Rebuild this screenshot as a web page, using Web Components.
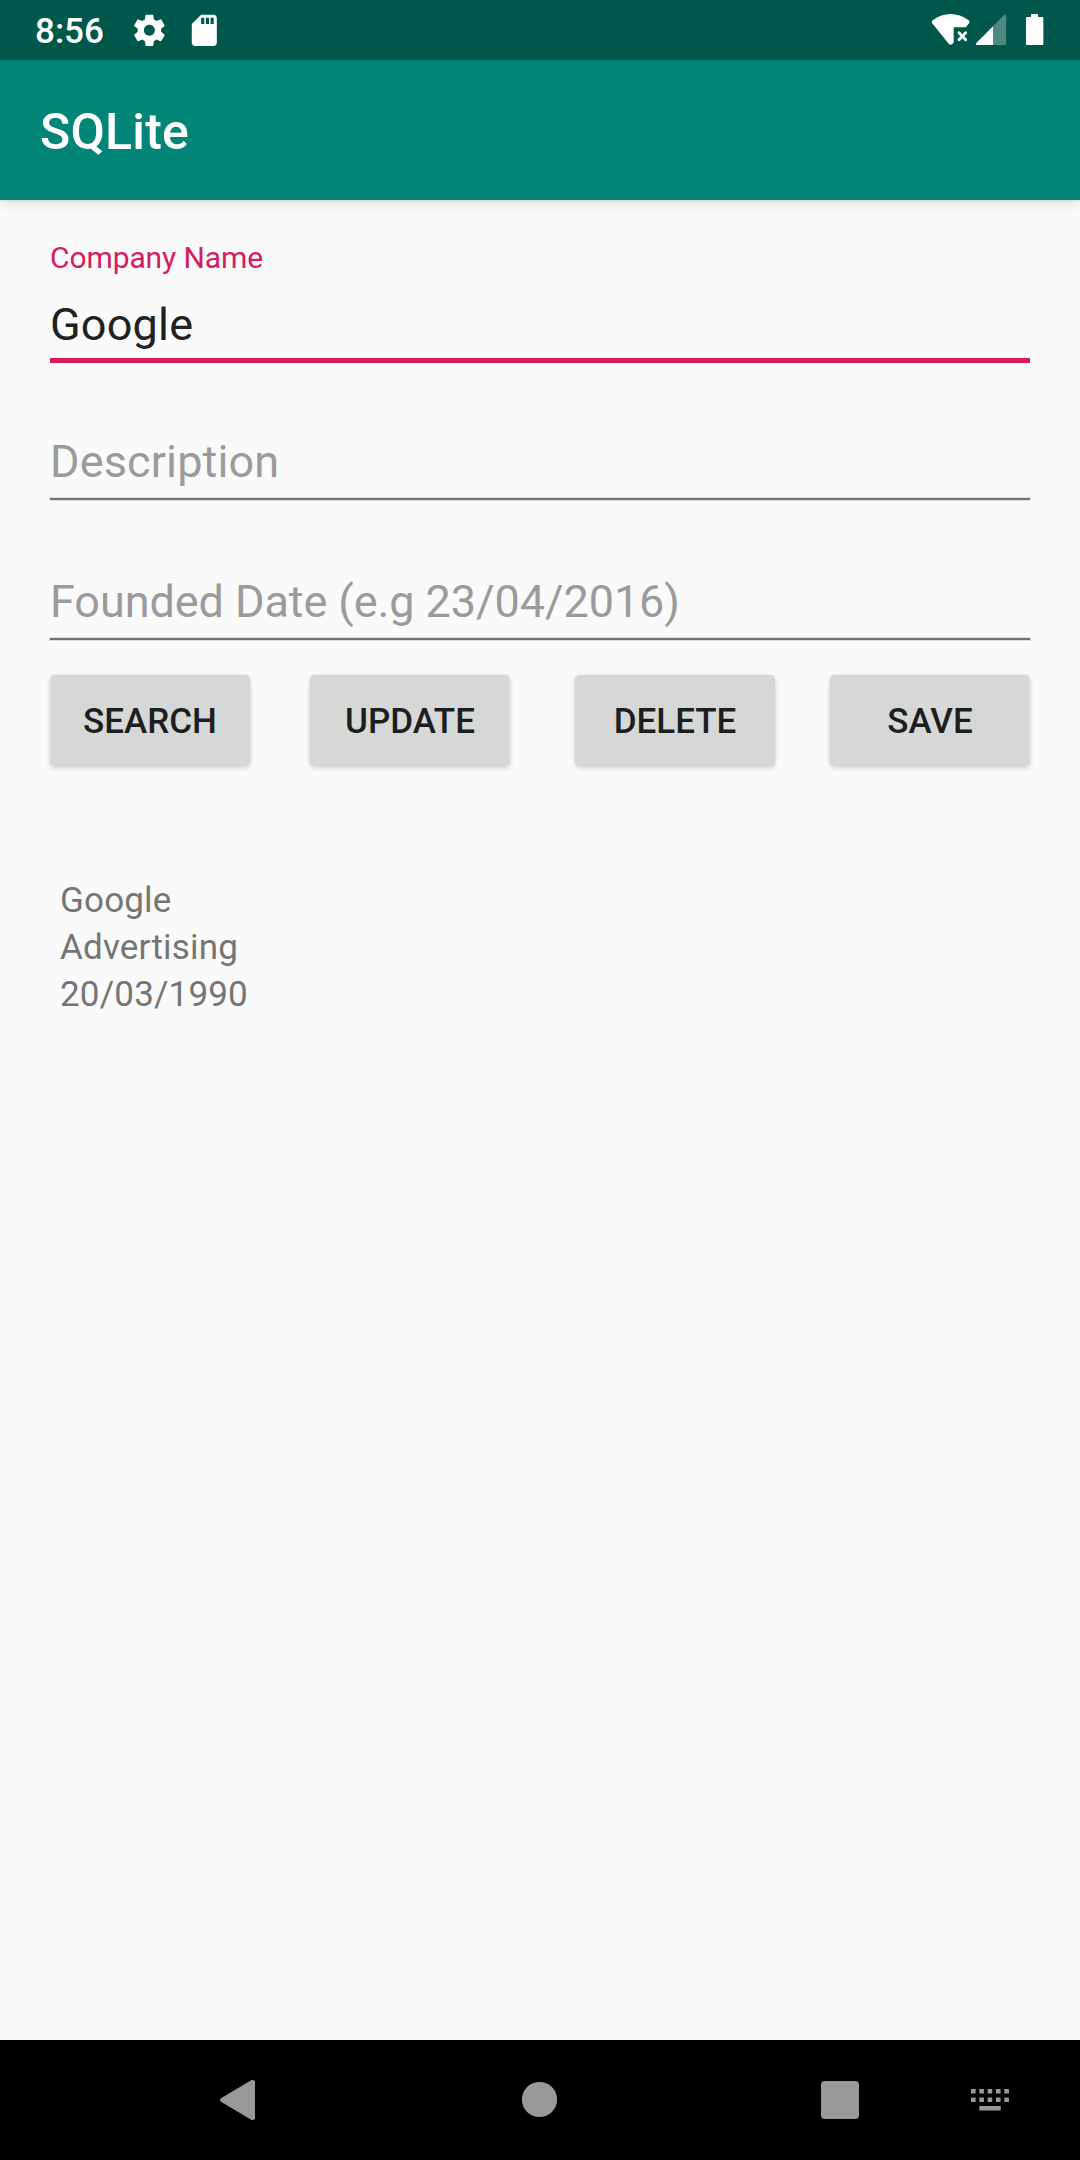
<!DOCTYPE html>
<html lang="en">
<head>
<meta charset="utf-8">
<title>SQLite</title>
<style>
html,body{margin:0;padding:0}
body{width:1080px;height:2160px;overflow:hidden;background:#fafafa;font-family:Roboto,"Noto Sans",sans-serif}
</style>
</head>
<body>
<phone-screen>
  <status-bar slot="top" time="8:56"></status-bar>
  <app-bar slot="top">SQLite</app-bar>
  <text-field label="Company Name" focused style="letter-spacing:.2px">Google</text-field>
  <text-field style="letter-spacing:.13px">Description</text-field>
  <text-field style="letter-spacing:-.07px">Founded Date (e.g 23/04/2016)</text-field>
  <button-row>
    <push-button>SEARCH</push-button>
    <push-button style="margin-left:60px">UPDATE</push-button>
    <push-button style="margin-left:65px">DELETE</push-button>
    <push-button style="margin-left:55px">SAVE</push-button>
  </button-row>
  <company-record>
    <span>Google</span><span>Advertising</span><span>20/03/1990</span>
  </company-record>
  <nav-bar slot="bottom"></nav-bar>
</phone-screen>
<script>
const define = (name, html) => customElements.define(name, class extends HTMLElement {
  constructor() {
    super();
    const t = document.createElement('template');
    t.innerHTML = html;
    this.attachShadow({mode: 'open'}).append(t.content.cloneNode(true));
  }
  connectedCallback() {
    for (const el of this.shadowRoot.querySelectorAll('[data-attr]'))
      el.textContent = this.getAttribute(el.dataset.attr) || '';
  }
});

define('phone-screen', `
<style>
:host{display:flex;flex-direction:column;width:1080px;height:2160px;background:#fafafa}
header{display:flex;flex-direction:column;flex:none;box-shadow:0 1px 2px rgba(0,0,0,.08),0 4px 12px rgba(0,0,0,.1)}
main{flex:1;display:flex;flex-direction:column;padding:40px 50px 0}
</style>
<header><slot name="top"></slot></header>
<main><slot></slot></main>
<slot name="bottom"></slot>`);

define('status-bar', `
<style>
:host{display:flex;height:60px;background:#00574b;color:#fff}
.time{width:95px;padding-left:35px;font-size:35px;font-weight:500;line-height:64px;height:60px;white-space:nowrap}
svg{display:block;height:60px;flex:none}
.gap{flex:1}
</style>
<div class="time" data-attr="time"></div>
<svg width="38" viewBox="390 0 114 180" fill="#fff"><g transform="translate(391.75 34.5) scale(4.7)"><path d="M19.43 12.98c.04-.32.07-.64.07-.98s-.03-.66-.07-.98l2.11-1.65c.19-.15.24-.42.12-.64l-2-3.46c-.12-.22-.39-.3-.61-.22l-2.49 1c-.52-.4-1.08-.73-1.69-.98l-.38-2.65C14.46 2.18 14.25 2 14 2h-4c-.25 0-.46.18-.49.42l-.38 2.65c-.61.25-1.17.59-1.69.98l-2.49-1c-.23-.09-.49 0-.61.22l-2 3.46c-.13.22-.07.49.12.64l2.11 1.65c-.04.32-.07.65-.07.98s.03.66.07.98l-2.11 1.65c-.19.15-.24.42-.12.64l2 3.46c.12.22.39.3.61.22l2.49-1c.52.4 1.08.73 1.69.98l.38 2.65c.03.24.24.42.49.42h4c.25 0 .46-.18.49-.42l.38-2.65c.61-.25 1.17-.59 1.69-.98l2.49 1c.23.09.49 0 .61-.22l2-3.46c.12-.22.07-.49-.12-.64l-2.11-1.65zM12 15.5c-1.930 0-3.500-1.570-3.500-3.500s1.570-3.500 3.500-3.500 3.500 1.570 3.500 3.500-1.570 3.500-3.500 3.500z"/></g></svg>
<svg width="38" viewBox="555 0 114 180" fill="#fff" style="margin-left:17px"><g transform="translate(556.5 34.5) scale(4.7)"><path d="M18 2h-8L4.020 8 4 20c0 1.100.9 2 2 2h12c1.100 0 2-.9 2-2V4c0-1.100-.9-2-2-2zm-6 6h-2V4h2v4zm3 0h-2V4h2v4zm3 0h-2V4h2v4z"/></g></svg>
<div class="gap"></div>
<svg width="42" viewBox="90 0 126 180" fill="#fff"><path d="M96 69Q94 64 98 61Q124 42 152 42Q180 42 206 61Q210 64 208 69L197 82H161V127Q160 133 152 134Q149 134 146 131Z"/><path d="M177 98L197 119M197 98L177 119" stroke="#fff" stroke-width="8.500" stroke-linecap="round"/></svg>
<svg width="32" viewBox="225 0 96 180" style="margin-left:3px"><path d="M279 79V135H230Q226 133 229 129Z" fill="#fff"/><path d="M279 79L311 46Q317 42 318.500 48V131Q318 135 314 135H279Z" fill="#fff" opacity=".3"/></svg>
<svg width="19" viewBox="375 0 57 180" fill="#fff" style="margin:0 36px 0 18px"><path d="M393 42H414V51H427Q430 51 430 54V132Q430 135 427 135H381Q378 135 378 132V54Q378 51 381 51H393Z"/></svg>`);

define('app-bar', `
<style>
:host{display:flex;align-items:center;height:140px;box-sizing:border-box;padding:4px 0 0 40px;background:#008577;color:#fff;font-size:50px;font-weight:500;letter-spacing:.2px}
</style><slot></slot>`);

define('text-field', `
<style>
:host{display:flex;flex-direction:column;height:140px;flex:none;color:#9b9b9b}
.label{height:36px;line-height:36px;font-size:30px;letter-spacing:-.1px;color:#d81b60}
.value{height:52px;line-height:52px;margin-top:22px;font-size:45px;white-space:nowrap}
.line{height:2px;margin-top:10px;background:#737373;box-shadow:0 0 0 1px rgba(117,117,117,.2)}
:host([focused]) .value{color:#212121;margin-top:23px}
:host([focused]){height:123px;margin-bottom:15px}
:host([focused]) .line{height:5px;margin-top:7px;background:#d81b60;box-shadow:none}
</style>
<div class="label" data-attr="label"></div>
<div class="value"><slot></slot></div>
<div class="line"></div>`);

define('button-row', `
<style>:host{display:flex;height:91px;flex:none;margin-top:17px}</style><slot></slot>`);

define('push-button', `
<style>
:host{display:block;width:200px;height:91px;flex:none}
button{display:block;width:100%;height:100%;border:0;margin:0;padding:2px 0 0;border-radius:5px;background:#d6d8d7;color:#1d1e1e;font:500 35px/89px Roboto,sans-serif;box-shadow:0 2px 5px rgba(0,0,0,.17),0 0 2px rgba(0,0,0,.07)}
</style><button><slot></slot></button>`);

define('company-record', `
<style>
:host{display:flex;flex-direction:column;margin:111px 0 0 10px;font-size:35px;line-height:47px;letter-spacing:.17px;color:#757575}
</style><slot></slot>`);

define('nav-bar', `
<style>
:host{display:flex;height:120px;flex:none;background:#000;padding-left:218px}
svg{display:block;height:120px;flex:none}
</style>
<svg width="40" viewBox="54 60 120 360" fill="#999" style="margin-top:0"><path d="M63 235L151 182Q157 178 165 183V297Q157 302 151 298L63 245Q57 240 63 235Z"/></svg>
<svg width="40" viewBox="0 0 40 120" fill="#999" style="margin-left:262px"><circle cx="19.500" cy="59.500" r="17.600"/></svg>
<svg width="40" viewBox="0 0 40 120" fill="#999" style="margin-left:260px"><rect x="1" y="41" width="38" height="38" rx="4"/></svg>
<svg width="40" viewBox="0 0 40 120" fill="#999" style="margin-left:110px"><path d="M1 49h4.600v4.600H1zm8.330 0h4.600v4.600h-4.600zm8.330 0h4.600v4.600h-4.600zm8.330 0h4.600v4.600h-4.600zm8.330 0h4.600v4.600h-4.600zM1 57.500h4.600v4.600H1zm8.330 0h4.600v4.600h-4.600zm8.330 0h4.600v4.600h-4.600zm8.330 0h4.600v4.600h-4.600zm8.330 0h4.600v4.600h-4.600zM9.300 66h21.400v4.600H9.300z"/></svg>`);
</script>
</body>
</html>
